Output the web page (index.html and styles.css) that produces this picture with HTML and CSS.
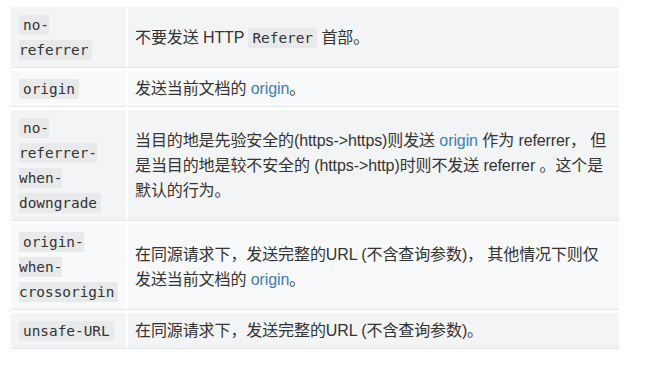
FILE: index.html
```html
<!DOCTYPE html>
<html lang="zh-CN">
<head>
<meta charset="utf-8">
<link rel="stylesheet" href="styles.css">
</head>
<body>
<div class="page">
  <table class="policy">
    <tbody>
      <tr class="odd">
        <td class="key"><code>no-<br>referrer</code></td>
        <td class="desc">不要发送 HTTP <code>Referer</code> 首部。</td>
      </tr>
      <tr class="even">
        <td class="key"><code>origin</code></td>
        <td class="desc">发送当前文档的 <a class="link">origin</a>。</td>
      </tr>
      <tr class="odd">
        <td class="key"><code>no-<br>referrer-<br>when-<br>downgrade</code></td>
        <td class="desc">当目的地是先验安全的(https-&gt;https)则发送 <a class="link">origin</a> 作为 referrer， 但<br>是当目的地是较不安全的 (https-&gt;http)时则不发送 referrer 。这个是<br>默认的行为。</td>
      </tr>
      <tr class="even">
        <td class="key"><code>origin-<br>when-<br>crossorigin</code></td>
        <td class="desc">在同源请求下，发送完整的URL (不含查询参数)， 其他情况下则仅<br>发送当前文档的 <a class="link">origin</a>。</td>
      </tr>
      <tr class="odd">
        <td class="key"><code>unsafe-URL</code></td>
        <td class="desc">在同源请求下，发送完整的URL (不含查询参数)。</td>
      </tr>
    </tbody>
  </table>
</div>
</body>
</html>
```

FILE: styles.css
```css
html, body {
  margin: 0;
  padding: 0;
  background: #ffffff;
}

.page {
  padding: 4px 0 0 9px;
}

.policy {
  width: 612px;
  table-layout: fixed;
  border-collapse: separate;
  border-spacing: 2px 3px;
  font-family: "Liberation Sans", "Noto Sans CJK SC", sans-serif;
  font-size: 16px;
  line-height: 25px;
  color: #333333;
}

.policy td {
  padding: 5px 8px 5px 8px;
  border-bottom: 1px solid #e3e6ea;
  vertical-align: middle;
}

.policy .key {
  width: 99px;
}

.policy .desc {
  padding-left: 7px;
  white-space: nowrap;
  letter-spacing: -0.1px;
}

.odd td {
  background: #f3f4f6;
}

.even td {
  background: #f8f9fa;
}

code {
  font-family: "DejaVu Sans Mono", "Liberation Mono", monospace;
  font-size: 14.4px;
  line-height: 1;
  background: #e8e9ea;
  color: #333333;
  padding: 2px 4px;
  border-radius: 2px;
  letter-spacing: 0;
}

.link {
  color: #3f7db5;
  text-decoration: none;
}
```
